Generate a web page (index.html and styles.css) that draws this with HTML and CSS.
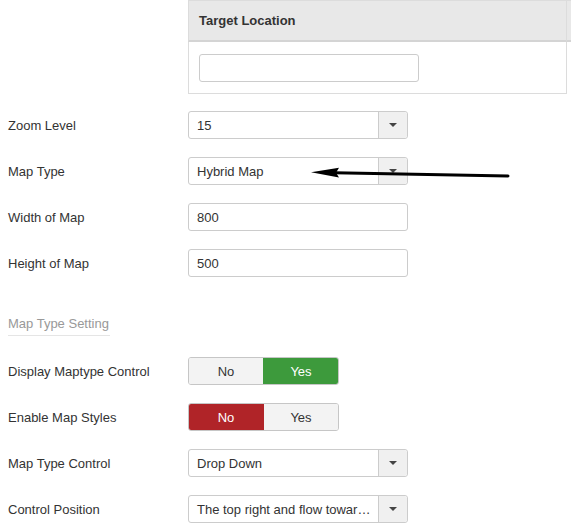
FILE: index.html
```html
<!DOCTYPE html>
<html>
<head>
<meta charset="utf-8">
<link rel="stylesheet" href="styles.css">
</head>
<body>
<div class="page">
  <div class="table-row">
    <div class="grid-table">
      <div class="th first">Target Location</div>
      <div class="th second"></div>
      <div class="td first"><input class="text-input wide" type="text" value=""></div>
      <div class="td second"></div>
    </div>
  </div>

  <div class="row">
    <label class="label">Zoom Level</label>
    <div class="select"><span class="select-value">15</span><span class="select-btn"><span class="caret"></span></span></div>
  </div>
  <div class="row">
    <label class="label">Map Type</label>
    <div class="select"><span class="select-value">Hybrid Map</span><span class="select-btn"><span class="caret"></span></span></div>
  </div>
  <div class="row">
    <label class="label">Width of Map</label>
    <div class="input">800</div>
  </div>
  <div class="row">
    <label class="label">Height of Map</label>
    <div class="input">500</div>
  </div>

  <div class="section"><span class="section-title">Map Type Setting</span></div>

  <div class="row">
    <label class="label">Display Maptype Control</label>
    <div class="toggle"><span class="tbtn">No</span><span class="tbtn yes-on">Yes</span></div>
  </div>
  <div class="row">
    <label class="label">Enable Map Styles</label>
    <div class="toggle"><span class="tbtn no-on">No</span><span class="tbtn">Yes</span></div>
  </div>
  <div class="row">
    <label class="label">Map Type Control</label>
    <div class="select"><span class="select-value">Drop Down</span><span class="select-btn"><span class="caret"></span></span></div>
  </div>
  <div class="row">
    <label class="label">Control Position</label>
    <div class="select"><span class="select-value" title="The top right and flow towards the left">The top right and flow towar…</span><span class="select-btn"><span class="caret"></span></span></div>
  </div>
</div>

<svg class="arrow" width="571" height="532" viewBox="0 0 571 532" xmlns="http://www.w3.org/2000/svg">
  <line x1="508" y1="176" x2="334" y2="172.7" stroke="#000" stroke-width="3" stroke-linecap="round"/>
  <polygon points="311,172.3 339,167.8 336,172.8 339,177.6" fill="#000"/>
</svg>
</body>
</html>
```

FILE: styles.css
```css
html, body {
  margin: 0;
  padding: 0;
  background: #fff;
}
body {
  font-family: "Liberation Sans", Arial, sans-serif;
  font-size: 13px;
  color: #333;
  width: 571px;
  height: 532px;
  overflow: hidden;
  position: relative;
}
.page {
  padding-left: 8px;
}
.table-row {
  padding-left: 180px;
  margin-bottom: 17px;
}
.grid-table {
  display: grid;
  grid-template-columns: 379px 40px;
  width: 383px;
  overflow: hidden;
}
.th {
  background: #e8e8e8;
  border-top: 1px solid #dcdcdc;
  border-bottom: 2px solid #d4d4d4;
  line-height: 40px;
  font-weight: bold;
  color: #333;
  box-sizing: border-box;
  height: 42px;
}
.th.first {
  border-left: 1px solid #dcdcdc;
  border-right: 1px solid #dcdcdc;
  padding-left: 10px;
}
.td.first {
  border-left: 1px solid #dcdcdc;
  border-right: 1px solid #dcdcdc;
  border-bottom: 1px solid #dcdcdc;
  padding: 12px 10px 11px 10px;
}
.text-input {
  display: block;
  box-sizing: border-box;
  width: 220px;
  height: 28px;
  border: 1px solid #ccc;
  border-radius: 3px;
  margin: 0;
  padding: 0 8px;
  font: inherit;
  background: #fff;
}
.row {
  display: grid;
  grid-template-columns: 180px 220px;
  align-items: center;
  height: 28px;
  margin-bottom: 18px;
}
.label {
  color: #333;
  white-space: nowrap;
}
.select, .input {
  box-sizing: border-box;
  height: 28px;
  width: 220px;
  border: 1px solid #ccc;
  border-radius: 3px;
  background: #fff;
  display: flex;
  align-items: center;
}
.input {
  padding-left: 8px;
}
.select-value {
  flex: 1;
  min-width: 0;
  padding-left: 8px;
  padding-right: 2px;
  white-space: nowrap;
  overflow: hidden;
}
.select-btn {
  width: 28px;
  height: 100%;
  border-left: 1px solid #ccc;
  background: #f0f0f0;
  border-radius: 0 3px 3px 0;
  display: flex;
  align-items: center;
  justify-content: center;
}
.caret {
  width: 0;
  height: 0;
  border-left: 4px solid transparent;
  border-right: 4px solid transparent;
  border-top: 4px solid #444;
}
.section {
  margin-top: 38px;
  margin-bottom: 21px;
}
.section-title {
  display: inline-block;
  color: #999;
  line-height: 18px;
  padding-bottom: 2px;
  padding-right: 1px;
  border-bottom: 1px solid #e5e5e5;
}
.toggle {
  display: flex;
  width: 151px;
  height: 28px;
  box-sizing: border-box;
  border: 1px solid #c6c6c6;
  border-radius: 3px;
  overflow: hidden;
}
.tbtn {
  flex: 1;
  display: flex;
  align-items: center;
  justify-content: center;
  background: #f3f3f3;
  color: #333;
}
.tbtn + .tbtn {
  border-left: 1px solid #c6c6c6;
}
.tbtn.yes-on {
  background: #3d9a3c;
  color: #fff;
  border-left-color: #3d9a3c;
}
.tbtn.no-on {
  background: #b02428;
  color: #fff;
}
.toggle .tbtn.no-on + .tbtn {
  border-left-color: #b02428;
}
.arrow {
  position: absolute;
  left: 0;
  top: 0;
  pointer-events: none;
}
```
